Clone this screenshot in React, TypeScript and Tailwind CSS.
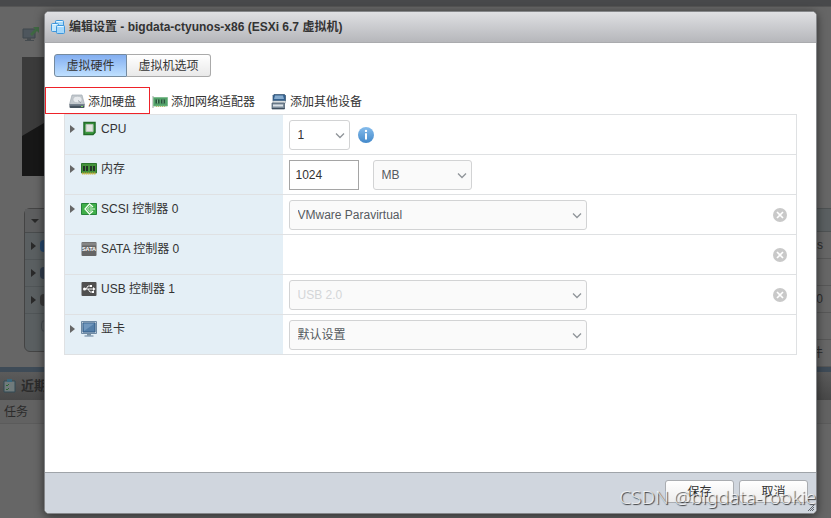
import type { ReactNode } from "react";

type Option = { value: string; width: string; muted?: boolean; disabled?: boolean };

function ChevronIcon() {
  return (
    <svg
      className="pointer-events-none absolute right-[5px] top-3 h-2 w-[10px]"
      viewBox="0 0 10 8"
      fill="none"
      stroke="#8f9499"
      strokeWidth="1.3"
    >
      <path d="M1 1.5 5 5.5 9 1.5" />
    </svg>
  );
}

function Select({ id, option, label }: { id?: string; option: Option; label?: string }) {
  return (
    <div className={`relative ${option.width}`}>
      <select
        id={id}
        aria-label={label}
        disabled={option.disabled}
        className={`block h-[30px] w-full appearance-none rounded-[3px] border border-[#d2d3d4] pl-2 text-xs disabled:text-[#d4d6d8] disabled:opacity-100 ${
          option.muted ? "bg-[#fafafa] text-[#565b60]" : "bg-white text-[#333]"
        }`}
      >
        <option>{option.value}</option>
      </select>
      <ChevronIcon />
    </div>
  );
}

function VmIcon() {
  return (
    <svg className="size-4 shrink-0" viewBox="0 0 16 16" stroke="#3f97dc">
      <rect x="5.5" y="1.5" width="8" height="8" rx="1" fill="#a9dbfa" />
      <rect x="1.5" y="4.5" width="7" height="8" rx="1" fill="#c4e8fd" />
      <rect x="6.5" y="6.5" width="8" height="8" rx="1" fill="#a5d8fb" />
      <path d="M7.5 7.5h6M2.5 5.5h4M6.5 2.5h6" stroke="#e9f7ff" />
    </svg>
  );
}

function DiskIcon() {
  return (
    <svg className="size-4 shrink-0" viewBox="0 0 16 16">
      <path d="M3 1h10l2.5 9.500h-15z" fill="#c3c9ce" stroke="#a2aab2" strokeWidth=".7" />
      <ellipse cx="8.500" cy="5.500" rx="4.500" ry="3.300" fill="#e6e9ec" stroke="#b4bac0" strokeWidth=".7" />
      <path d="M9 6.500 12 9" stroke="#9ba2a9" />
      <path d="M.5 10.300h15V13q0 1-1 1h-13q-1 0-1-1z" fill="#46535f" />
      <path d="M1 11h14" stroke="#8b98a4" />
      <path d="M12 12.500h2" stroke="#7fdc65" />
    </svg>
  );
}

function NicIcon() {
  return (
    <svg className="size-4 shrink-0" viewBox="0 0 16 16">
      <path d="M1 2v12" stroke="#9aa39c" />
      <path d="M1.5 3.500h14v8.500h-14z" fill="#52a268" stroke="#77b788" strokeWidth=".8" />
      <path d="M3.500 5.500h4v4h-4zM9 5.500h4v4H9z" fill="#28523a" />
      <path d="M5.500 5.500v4M11 5.500v4" stroke="#79b58b" />
      <path d="M4 12.500h10" stroke="#b9bd67" strokeDasharray="1 1" />
    </svg>
  );
}

function DeviceIcon() {
  return (
    <svg className="size-4 shrink-0" viewBox="0 0 16 16">
      <path d="M3 .5h10.500l1 1V7H2V1.500z" fill="#34618f" stroke="#34506d" strokeWidth=".7" />
      <path d="M4 1.500h8l1 3.500H3z" fill="#86abce" />
      <path d="M2 7h12.500v2H2z" fill="#f3f5f6" stroke="#a2abb3" strokeWidth=".6" />
      <path d="M1 9h12.500v6H1z" fill="#7d8c9a" stroke="#435465" strokeWidth=".7" />
      <path d="M2 10.500h10v2H2z" fill="#dce2e7" />
      <path d="M1 14.500h12.500" stroke="#3f4f5f" />
    </svg>
  );
}

function CpuIcon() {
  return (
    <svg className="size-4 shrink-0" viewBox="0 0 16 16">
      <path d="M3 1.500h11v10l-2 2H3z" fill="#3d9a40" stroke="#226b28" strokeWidth="1.500" />
      <path d="M5 3.500h7v7H5z" fill="#e0e4df" stroke="#b5c0b5" />
    </svg>
  );
}

function MemoryIcon() {
  return (
    <svg className="size-4 shrink-0" viewBox="0 0 16 16">
      <path d="M.5 2.500h15V12H.5z" fill="#43913a" stroke="#2c762c" />
      <path d="M2 5h2v5H2zM5 5h2v5H5zM9 5h2v5H9zM12 5h2v5h-2z" fill="#243428" />
      <path d="M1 12.500h14" stroke="#c9b544" strokeWidth="2" strokeDasharray="1.5 .5" />
    </svg>
  );
}

function ScsiIcon() {
  return (
    <svg className="size-4 shrink-0" viewBox="0 0 16 16" fill="none">
      <path d="M.5 2.500h15v11H.5z" fill="#3fae49" stroke="#27833a" />
      <path d="m12 6-3.500-3L4 8l4.500 5 3.500-3" stroke="#f3fff2" strokeWidth="1.300" />
      <path d="M10.500 6.500 8.700 5.500 6.500 8l2.200 2.500 1.800-1M8.500 8H14" stroke="#e1f8df" />
    </svg>
  );
}

function SataIcon() {
  return (
    <svg className="size-4 shrink-0" viewBox="0 0 16 16">
      <rect x=".5" y="1" width="15" height="14" rx="1" fill="#656565" />
      <path d="M1 1.500h14v3H1z" fill="#858585" />
      <text x="8" y="10" textAnchor="middle" fontSize="5.500" fontWeight="700" fill="#fff">
        SATA
      </text>
    </svg>
  );
}

function UsbIcon() {
  return (
    <svg className="size-4 shrink-0" viewBox="0 0 16 16" fill="none" stroke="#f2f2f2">
      <rect x=".5" y="1" width="15" height="14" rx="1" fill="#505050" stroke="none" />
      <path d="M3 8h10M5 8l2-3h2M7 8l2 3h2" />
      <circle cx="3.500" cy="8" r="1.500" fill="#fff" stroke="none" />
      <path d="m12 6 2.500 2-2.500 2z" fill="#fff" stroke="none" />
      <path d="M9 4h2v2H9zM11 10h2v2h-2z" fill="#fff" stroke="none" />
    </svg>
  );
}

function DisplayIcon() {
  return (
    <svg className="size-4 shrink-0" viewBox="0 0 16 16">
      <path d="M.5.5h15v12H.5z" fill="#c3d0dc" stroke="#6e8aa5" />
      <path d="M2 2h12v9H2z" fill="#547fa9" stroke="#315c86" />
      <path d="M2.500 2.500h11L3 10z" fill="#7198be" />
      <path d="M6 13h4v1.500H6z" fill="#78909f" />
      <path d="M3.500 15h9" stroke="#5f7c98" />
    </svg>
  );
}

function InfoIcon() {
  return (
    <svg className="size-4" viewBox="0 0 16 16">
      <defs>
        <linearGradient id="info" x2="0" y2="1">
          <stop stopColor="#85bcec" />
          <stop offset="1" stopColor="#4389ca" />
        </linearGradient>
      </defs>
      <circle cx="8" cy="8" r="8" fill="url(#info)" />
      <circle cx="8" cy="3.900" r="1.200" fill="#fff" />
      <path d="M8 6.300v6.200" fill="none" stroke="#fff" strokeWidth="2" />
    </svg>
  );
}

function RemoveIcon() {
  return (
    <svg className="size-[14px]" viewBox="0 0 14 14">
      <circle cx="7" cy="7" r="7" fill="#c9c9c9" />
      <path d="m4 4 6 6M10 4l-6 6" stroke="#fff" strokeWidth="1.700" />
    </svg>
  );
}

const actions = [
  { label: "添加硬盘", icon: <DiskIcon />, marked: true },
  { label: "添加网络适配器", icon: <NicIcon /> },
  { label: "添加其他设备", icon: <DeviceIcon /> },
];

type Device = {
  id: string;
  label: string;
  icon: ReactNode;
  expandable?: boolean;
  removable?: boolean;
  control?: ReactNode;
};

const devices: Device[] = [
  {
    id: "cpu",
    label: "CPU",
    icon: <CpuIcon />,
    expandable: true,
    control: (
      <>
        <Select id="cpu" option={{ value: "1", width: "w-[61px]" }} />
        <button aria-label="CPU" className="ml-2">
          <InfoIcon />
        </button>
      </>
    ),
  },
  {
    id: "memory",
    label: "内存",
    icon: <MemoryIcon />,
    expandable: true,
    control: (
      <>
        <input
          id="memory"
          defaultValue="1024"
          className="h-[30px] w-[70px] border border-[#a5a5a5] bg-white px-1.5 text-xs text-[#333]"
        />
        <div className="ml-3.5">
          <Select label="MB" option={{ value: "MB", width: "w-[99px]", muted: true }} />
        </div>
      </>
    ),
  },
  {
    id: "scsi",
    label: "SCSI 控制器 0",
    icon: <ScsiIcon />,
    expandable: true,
    removable: true,
    control: <Select id="scsi" option={{ value: "VMware Paravirtual", width: "w-[298px]", muted: true }} />,
  },
  { id: "sata", label: "SATA 控制器 0", icon: <SataIcon />, removable: true },
  {
    id: "usb",
    label: "USB 控制器 1",
    icon: <UsbIcon />,
    removable: true,
    control: (
      <Select id="usb" option={{ value: "USB 2.0", width: "w-[298px]", muted: true, disabled: true }} />
    ),
  },
  {
    id: "display",
    label: "显卡",
    icon: <DisplayIcon />,
    expandable: true,
    control: <Select id="display" option={{ value: "默认设置", width: "w-[298px]", muted: true }} />,
  },
];

function Triangle() {
  return (
    <svg className="h-2 w-[5px] shrink-0" viewBox="0 0 5 8" fill="currentColor">
      <path d="M0 0 5 4 0 8z" />
    </svg>
  );
}

function DeviceRow({ device }: { device: Device }) {
  return (
    <tr className="h-10 border border-[#dfe1e3]">
      <th scope="row" className="w-[218px] bg-[#e4eff6] pl-[5px] pt-1.5 text-left align-top font-normal">
        <div className="flex h-4 items-center">
          <button aria-label={device.label} className={`mr-1.5 text-[#666] ${device.expandable ? "" : "invisible"}`}>
            <Triangle />
          </button>
          {device.icon}
          <label htmlFor={device.control ? device.id : undefined} className="ml-1">
            {device.label}
          </label>
        </div>
      </th>
      <td className="pl-1.5 pr-[9px]">
        <div className="flex items-center">
          {device.control}
          {device.removable && (
            <button aria-label={`${device.label} ×`} className="ml-auto">
              <RemoveIcon />
            </button>
          )}
        </div>
      </td>
    </tr>
  );
}

function Backdrop() {
  return (
    <div className="min-h-screen bg-[#666] text-[#2b2b2b]">
      <div className="h-[7px] border-b border-[#555] bg-[#48494b]" />
      <div className="px-[22px] pt-[18px]">
        <svg className="size-[18px]" viewBox="0 0 18 18">
          <path d="M1 4h12v9H1z" fill="#4e565d" stroke="#3e464c" />
          <path d="M5 13h4v2h3v1H3v-1h2z" fill="#464c50" />
          <path d="M8 9 13 4l-2-2h6v6l-2-2-5 5z" fill="#3f6842" />
        </svg>
        <div className="mt-3.5 h-[119px] w-40 bg-[#3b3b3b]">
          <svg className="h-full w-full" viewBox="0 0 160 119">
            <path d="M0 79 22 66 160 40v79H0z" fill="#171717" />
          </svg>
        </div>
      </div>
      <div className="mt-8 flex items-start justify-between pl-6">
        <div className="w-1/3 rounded-md border border-[#444] bg-[#5a5f61]">
          <div className="flex h-6 items-center border-b border-[#484b4c] bg-[#5d5e5f] pl-1.5">
            <svg className="h-1 w-2" viewBox="0 0 8 4">
              <path d="M0 0h8L4 4z" fill="#292929" />
            </svg>
          </div>
          {["bg-[#24466c]", "bg-[#303c4c]", "bg-[#393939]"].map((color) => (
            <div key={color} className="flex h-[27px] items-center gap-1 border-b border-[#505557] pl-1.5 text-[#292929]">
              <Triangle />
              <span className={`size-3 rounded-sm ${color}`} />
            </div>
          ))}
          <div className="flex h-[37px] pl-4 pt-1.5">
            <span className="size-3 rounded-sm border border-[#454b50]" />
          </div>
        </div>
        <div className="w-1/3 text-right text-xs">
          <div className="h-6 border-y border-[#4e5253] bg-[#5a5f61]" />
          {["s", "", "0", "", "件"].map((text, i) => (
            <div key={i} className="h-[27px] border-b border-[#575757] pr-2 leading-[27px]">
              {text}
            </div>
          ))}
        </div>
      </div>
      <div className="h-[5px] bg-[#3e4b57]" />
      <div className="flex h-7 items-center gap-1 bg-gradient-to-b from-[#5b5b5b] to-[#484848] pl-[3px]">
        <svg className="size-[14px]" viewBox="0 0 14 14" fill="none">
          <path d="M1 2h11v11H1z" fill="#707b7c" stroke="#334a55" />
          <path d="M4 0h5v3H4z" fill="#39677c" />
          <path d="m3 6 1 1 2-2M3 10l1 1 2-2" stroke="#2c6432" />
        </svg>
        <span className="text-[13px] font-bold">近期任务</span>
      </div>
      <div className="h-6 border-b border-[#5b5b5b] bg-[#626262] pl-1 text-xs leading-6">任务</div>
    </div>
  );
}

export default function App() {
  return (
    <div className="relative min-h-screen overflow-hidden font-['Liberation_Sans','Noto_Sans_CJK_SC',sans-serif] text-xs text-[#333]">
      <Backdrop />

      <section
        role="dialog"
        aria-labelledby="dialog-title"
        className="absolute bottom-1 left-11 right-3.5 top-[11px] flex flex-col overflow-hidden rounded-[5px] border border-[#85878a] bg-white shadow-[0_2px_10px_rgba(0,0,0,0.55)]"
      >
        <header className="flex h-[31px] shrink-0 items-center gap-[3px] border-b border-[#aaabae] bg-gradient-to-b from-[#dfe0e3] to-[#b6b7bb] pl-[5px]">
          <VmIcon />
          <h1 id="dialog-title" className="font-bold">
            编辑设置 - bigdata-ctyunos-x86 (ESXi 6.7 虚拟机)
          </h1>
        </header>

        <main className="flex-1 px-[19px] pt-[11px]">
          {/* Tabs */}
          <div role="tablist" className="-ml-[10px] flex h-[23px]">
            <button
              role="tab"
              aria-selected="true"
              className="w-[73px] rounded-l-[3px] border border-[#758a9e] bg-gradient-to-b from-[#83aef0] to-[#bfe0ff]"
            >
              虚拟硬件
            </button>
            <button
              role="tab"
              aria-selected="false"
              className="w-[84px] rounded-r-[3px] border border-l-0 border-[#aaa] bg-gradient-to-b from-white to-[#e9e9e9]"
            >
              虚拟机选项
            </button>
          </div>

          {/* Toolbar */}
          <div className="flex h-[37px] items-center gap-4 pl-[5px] pt-3">
            {actions.map((action) => (
              <div key={action.label} className="relative">
                <button className="flex items-center gap-[3px] whitespace-nowrap">
                  {action.icon}
                  {action.label}
                </button>
                {action.marked && (
                  <div className="pointer-events-none absolute -bottom-1 -left-6 -right-3.5 -top-[7px] shadow-[inset_0_0_0_1px_#ee2229]" />
                )}
              </div>
            ))}
          </div>

          <table className="w-full table-fixed border-collapse">
            <tbody>
              {devices.map((device) => (
                <DeviceRow key={device.id} device={device} />
              ))}
            </tbody>
          </table>
        </main>

        <footer className="relative flex h-[41px] shrink-0 items-start justify-end gap-[5px] border-t border-[#9fa4a9] bg-[#d0d6de] pr-2 pt-[7px]">
          {["保存", "取消"].map((label) => (
            <button
              key={label}
              className="h-[23px] w-[69px] rounded-[3px] border border-[#aaadb1] bg-gradient-to-b from-white to-[#ededed]"
            >
              {label}
            </button>
          ))}
          <svg className="absolute bottom-0.5 right-0.5 size-1.5" viewBox="0 0 6 6" stroke="#60666d">
            <path d="M0 6 6 0M2 6l4-4M4 6l2-2" />
          </svg>
        </footer>
      </section>

      <p className="pointer-events-none absolute bottom-[7px] right-[15px] font-['Noto_Sans',sans-serif] text-[19px] font-light leading-7 text-white/75 [text-shadow:1px_1px_1px_rgba(0,0,0,0.75)]">
        CSDN @bigdata-rookie
      </p>
    </div>
  );
}
